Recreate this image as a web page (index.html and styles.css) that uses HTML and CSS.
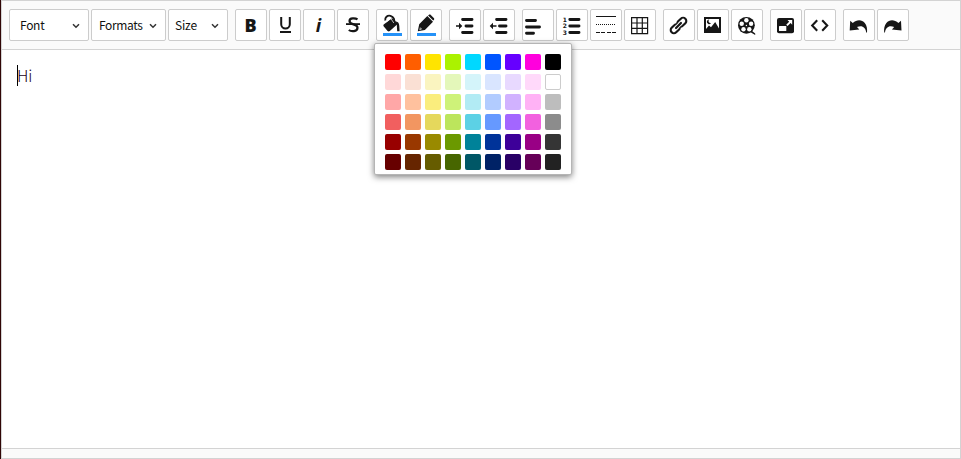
FILE: index.html
```
<!DOCTYPE html>
<html lang="en">
<head>
<meta charset="utf-8">
<title>Editor</title>
<link rel="stylesheet" href="styles.css">
</head>
<body>
<div class="editor">
  <div class="toolbar">
    <div class="group">
      <button class="select font">Font<svg class="chev" viewBox="0 0 8 6"><path d="M1 1.2 4 4.2 7 1.2"/></svg></button>
      <button class="select formats">Formats<svg class="chev" viewBox="0 0 8 6"><path d="M1 1.2 4 4.2 7 1.2"/></svg></button>
      <button class="select size">Size<svg class="chev" viewBox="0 0 8 6"><path d="M1 1.2 4 4.2 7 1.2"/></svg></button>
    </div>
    <div class="group">
      <button class="btn"><svg viewBox="1 1 30 30"><text class="bold" x="9.500" y="22.700">B</text></svg></button>
      <button class="btn"><svg viewBox="1 1 30 30"><path class="line" d="M12.200 8v7.200a4.300 4.300 0 0 0 8.600 0V8" stroke-width="2"/><path d="M11 22h11v2H11z"/></svg></button>
      <button class="btn"><svg viewBox="1 1 30 30"><text class="italic" x="12.800" y="22.700">i</text></svg></button>
      <button class="btn"><svg viewBox="1 1 30 30"><path class="line" d="M20.500 10.400C18.500 9 12.500 8.500 12.500 12c0 4.400 8 2.400 8 6.800 0 4.200-6.500 3.900-8.700 2.200" stroke-width="2.200"/><path d="M9 14.200h14v1.800H9z"/></svg></button>
    </div>
    <div class="group">
      <button class="btn"><svg viewBox="1 1 30 30"><path d="m7.700 15.500 8.300-6.300 6.200 5.300-8.400 7.600c-.7.500-1.500.5-2.200-.1l-3.800-4.500c-.5-.6-.6-1.400-.1-2z"/><path d="M20 12.500c2.300.2 3.100 1.700 3.300 4.500l.3 5.200h-2.400l-.4-6z"/><path class="line" d="M9.300 11.600C8.500 8.500 11.500 5.900 14.500 6.800c3.300 1 4.600 4.500 3.300 6.700" stroke-width="1.900"/><path class="line light" d="m10.500 12.800 4.300-3.300 3 4.500" stroke-width=".7"/><path class="accent" d="M7 24h19v3H7z"/></svg></button>
      <button class="btn"><svg viewBox="1 1 30 30"><path d="m7.800 22.200 1.400-7 8.100-8.100 5.700 5.700-8.100 8.100zM18.100 6.500l.6-.6c.6-.6 1.500-.6 2.100 0l3 3c.6.6.6 1.500 0 2.100l-.6.600z"/><path class="line light" d="M9.700 20.700l.6-2 1.300 1.400z" stroke-width=".6"/><path class="accent" d="M7 24h19v3H7z"/></svg></button>
    </div>
    <div class="group">
      <button class="btn"><svg viewBox="1 1 30 30"><path class="line bars" d="M13.600 10.500h9.400M17 17h6M13.600 23.500h9.400" stroke-width="2.900"/><path d="M7 16.200h3v-2.400l3.300 3.200-3.300 3.200v-2.400H7z"/></svg></button>
      <button class="btn"><svg viewBox="1 1 30 30"><path class="line bars" d="M13.600 10.500h9.400M16.500 17h6.500M13.600 23.500h9.400" stroke-width="2.900"/><path d="M13.500 16.200H10v-2.400L6.700 17l3.300 3.200v-2.400h3.500z"/></svg></button>
    </div>
    <div class="group">
      <button class="btn"><svg viewBox="1 1 30 30"><path class="line bars" d="M4.500 11.500h9M4.500 18h13M4.500 24.300h7" stroke-width="2.900"/></svg></button>
      <button class="btn"><svg viewBox="1 1 30 30"><path class="line bars" d="M13.800 10.500h9.200M13.800 17h9.200M13.800 23.500h9.200" stroke-width="2.900"/><text class="digit" x="6.700" y="12.600">1</text><text class="digit" x="6.700" y="19.100">2</text><text class="digit" x="6.700" y="25.600">3</text></svg></button>
      <button class="btn"><svg viewBox="1 1 30 30" shape-rendering="crispEdges"><path class="line" d="M6 7.500h20"/><path class="line" d="M6 15.500h20" stroke-dasharray="1 1"/><path class="line" d="M6 23.500h20" stroke-dasharray="4 1.300"/></svg></button>
      <button class="btn"><svg viewBox="1 1 30 30"><path class="line" d="M7.600 8.600h16v16h-16zM7.600 14h16M7.600 19.300h16M13 8.600v16M18.300 8.600v16" stroke-width="1.200"/></svg></button>
    </div>
    <div class="group">
      <button class="btn"><svg viewBox="1 1 30 30"><g transform="rotate(-45 15.500 16.500)"><rect class="line" x="5.800" y="13.300" width="10.200" height="6.400" rx="3.200" stroke-width="2.100"/><rect class="line" x="15" y="13.300" width="10.200" height="6.400" rx="3.200" stroke-width="2.100"/><path class="line light" d="M12.200 16.500h6.600" stroke-width="4"/><path class="line bars" d="M12 16.500h7" stroke-width="2.200"/></g></svg></button>
      <button class="btn"><svg viewBox="1 1 30 30"><path fill-rule="evenodd" d="M7 8h17v16H7zM9 10v12h13V10z"/><path d="M9 22v-2l3-3.500 2 1.800 4.200-5.300L22 19.500V22z"/><path d="M12.300 10.500a2.300 2.300 0 1 0 1.800 3.500 2 2 0 0 1-1.800-3.500z"/></svg></button>
      <button class="btn"><svg viewBox="1 1 30 30"><circle cx="15.400" cy="16.300" r="8.400"/><path d="M17 22h4l3.200 2.400V26L20 23.500z"/><g class="hole"><circle cx="15.400" cy="11.300" r="2.200"/><circle cx="10.700" cy="14.700" r="2.200"/><circle cx="20.100" cy="14.700" r="2.200"/><circle cx="12.500" cy="20.200" r="2.200"/><circle cx="18.300" cy="20.200" r="2.200"/><circle cx="15.400" cy="16.500" r=".7"/></g></svg></button>
    </div>
    <div class="group">
      <button class="btn"><svg viewBox="1 1 30 30"><rect x="7" y="9" width="17" height="15.300" rx="2"/><rect class="hole" x="9" y="17" width="7.300" height="5" rx=".5"/><path class="hole" d="M17.500 11h4.700v4.700l-1.600-1.600-3 3-1.400-1.400 3-3z"/></svg></button>
      <button class="btn"><svg viewBox="1 1 30 30"><path class="line" d="m13.200 11.300-5 5.200 5 5.200M18.200 11.300l5 5.200-5 5.200" stroke-width="2.100"/></svg></button>
    </div>
    <div class="group">
      <button class="btn"><svg viewBox="1 1 30 30"><path d="M7.200 11.800 9.800 14c4-3.600 9-3.700 12 .1 2 2.500 2.600 5.700 2.200 9.400h-.8c-.7-5.300-4.200-7.600-9.200-5.500l2.300 2.400-9.600 1z"/></svg></button>
      <button class="btn"><svg viewBox="1 1 30 30"><path d="M24 11.800 21.400 14c-4-3.600-9-3.700-12 .1-2 2.500-2.600 5.700-2.200 9.400H8c.7-5.300 4.200-7.600 9.200-5.500l-2.300 2.400 9.600 1z"/></svg></button>
    </div>
  </div>
  <div class="content"><span class="caret"></span><span class="copy">Hi</span></div>
  <div class="status"></div>
</div>
<div class="palette">
  <i class="c1"></i><i class="c2"></i><i class="c3"></i><i class="c4"></i><i class="c5"></i><i class="c6"></i><i class="c7"></i><i class="c8"></i><i class="c9"></i>
  <i class="c10"></i><i class="c11"></i><i class="c12"></i><i class="c13"></i><i class="c14"></i><i class="c15"></i><i class="c16"></i><i class="c17"></i><i class="c18"></i>
  <i class="c19"></i><i class="c20"></i><i class="c21"></i><i class="c22"></i><i class="c23"></i><i class="c24"></i><i class="c25"></i><i class="c26"></i><i class="c27"></i>
  <i class="c28"></i><i class="c29"></i><i class="c30"></i><i class="c31"></i><i class="c32"></i><i class="c33"></i><i class="c34"></i><i class="c35"></i><i class="c36"></i>
  <i class="c37"></i><i class="c38"></i><i class="c39"></i><i class="c40"></i><i class="c41"></i><i class="c42"></i><i class="c43"></i><i class="c44"></i><i class="c45"></i>
  <i class="c46"></i><i class="c47"></i><i class="c48"></i><i class="c49"></i><i class="c50"></i><i class="c51"></i><i class="c52"></i><i class="c53"></i><i class="c54"></i>
</div>
</body>
</html>
```
FILE: styles.css
```
* { box-sizing: border-box; }
body {
  margin: 0;
  height: 459px;
  padding-left: 1px;
  overflow: hidden;
  background: #300606;
  font-family: "Noto Sans CJK KR", "Noto Sans", sans-serif;
}
.editor {
  display: flex;
  flex-direction: column;
  height: 459px;
  border: 1px solid #d3d3d3;
  background: #fff;
}
.toolbar {
  display: flex;
  gap: 7px;
  height: 49px;
  padding: 8px 7px;
  background: #fafafa;
  border-bottom: 1px solid #d3d3d3;
}
.group { display: flex; gap: 2px; }
button {
  flex: none;
  height: 32px;
  padding: 0;
  border: 1px solid #ccc;
  border-radius: 2px;
  background: #fff;
  color: #111;
  font: 12px "Noto Sans CJK KR", sans-serif;
}
.select {
  display: flex;
  align-items: center;
  justify-content: space-between;
  padding-bottom: 2px;
}
.font { width: 80px; padding: 0 8px 2px 10px; letter-spacing: -.3px; }
.formats { width: 75px; padding: 0 8px 2px 7px; letter-spacing: -.35px; }
.size { width: 60px; padding: 0 8px 2px 6px; letter-spacing: -.2px; }
.chev {
  width: 8px;
  height: 6px;
  margin-top: 4px;
  fill: none;
  stroke: #333;
  stroke-width: 1.5;
}
.btn { width: 32px; }
.btn svg { display: block; width: 30px; height: 30px; fill: #161616; }
.btn .line { fill: none; stroke: #161616; }
.btn .bars { stroke-linecap: round; }
.btn .light { stroke: #fff; }
.btn .hole { fill: #fff; }
.btn .accent { fill: #2491f7; }
.bold { font: 800 18px "Open Sans", sans-serif; }
.italic { font: italic 700 18px "Noto Sans", sans-serif; }
.digit { font: bold 6px "DejaVu Sans", sans-serif; }
.content {
  flex: 1;
  display: flex;
  align-items: flex-start;
  padding: 15px;
  font-size: 16px;
  font-weight: 300;
  color: #200020;
}
.copy { line-height: 20px; margin-left: -1px; }
.caret { width: 1px; height: 21px; background: #000; }
.status { height: 10px; border-top: 1px solid #d3d3d3; background: #fafafa; }
.palette {
  position: absolute;
  left: 374px;
  top: 43px;
  display: grid;
  grid-template-columns: repeat(9, 16px);
  grid-auto-rows: 16px;
  gap: 4px;
  width: 198px;
  height: 132px;
  padding: 10px;
  border: 1px solid #b5b5b5;
  border-radius: 2px;
  background: #fff;
  box-shadow: 0 2px 6px rgba(0, 0, 0, .5);
}
.palette i { border-radius: 2px; }
.c1 { background: #ff0000; } .c2 { background: #ff5e00; } .c3 { background: #ffe400; }
.c4 { background: #abf200; } .c5 { background: #00d8ff; } .c6 { background: #0055ff; }
.c7 { background: #6600ff; } .c8 { background: #ff00dd; } .c9 { background: #000000; }
.c10 { background: #ffd8d8; } .c11 { background: #fae0d4; } .c12 { background: #faf4c0; }
.c13 { background: #e4f7ba; } .c14 { background: #d4f4fa; } .c15 { background: #d9e5ff; }
.c16 { background: #e8d9ff; } .c17 { background: #ffd9fa; } .c18 { background: #fff; border: 1px solid #ccc; }
.c19 { background: #ffa7a7; } .c20 { background: #ffc19e; } .c21 { background: #faed7d; }
.c22 { background: #cef279; } .c23 { background: #b2ebf4; } .c24 { background: #b2ccff; }
.c25 { background: #d1b2ff; } .c26 { background: #ffb2f5; } .c27 { background: #bdbdbd; }
.c28 { background: #f15f5f; } .c29 { background: #f29661; } .c30 { background: #e5d85c; }
.c31 { background: #bce55c; } .c32 { background: #5cd1e5; } .c33 { background: #6699ff; }
.c34 { background: #a366ff; } .c35 { background: #f261df; } .c36 { background: #8c8c8c; }
.c37 { background: #980000; } .c38 { background: #993800; } .c39 { background: #998a00; }
.c40 { background: #6b9900; } .c41 { background: #008299; } .c42 { background: #003399; }
.c43 { background: #3d0099; } .c44 { background: #990085; } .c45 { background: #353535; }
.c46 { background: #670000; } .c47 { background: #662500; } .c48 { background: #665c00; }
.c49 { background: #476600; } .c50 { background: #005766; } .c51 { background: #002266; }
.c52 { background: #290066; } .c53 { background: #660058; } .c54 { background: #222222; }
```
